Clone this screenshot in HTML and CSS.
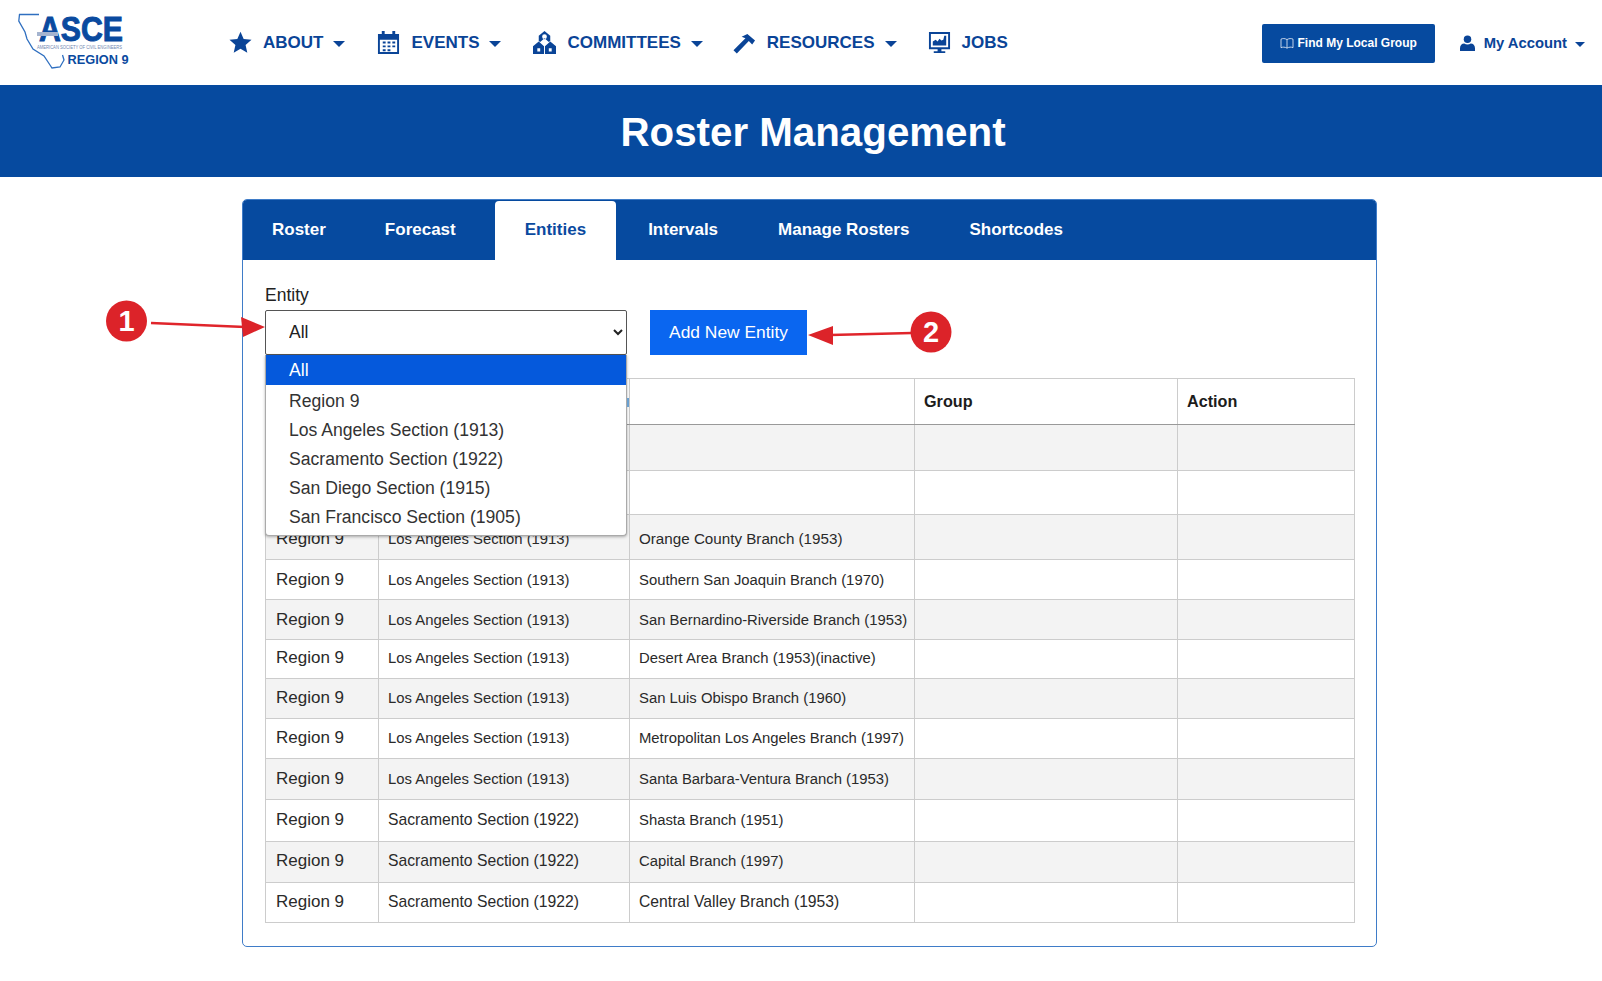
FILE: index.html
```html
<!DOCTYPE html>
<html lang="en">
<head>
<meta charset="utf-8">
<title>Roster Management</title>
<link rel="stylesheet" href="styles.css">
</head>
<body>
<div class="page">
  <header class="topbar">
    <a class="logo" href="#">
      <svg width="116" height="62" viewBox="0 0 116 62">
        <path class="logo-map" d="M21 1.500H1.500L0.800 8L7 19L9 26L15 36L26 43L32 52L34 55L42 54L46 47L44.500 42"/>
        <text class="logo-asce" x="21" y="28" textLength="84" lengthAdjust="spacingAndGlyphs">ASCE</text>
        <rect class="logo-bar" x="19" y="19" width="21" height="4"/>
        <text class="logo-sub" x="19" y="36" textLength="85" lengthAdjust="spacingAndGlyphs">AMERICAN SOCIETY OF CIVIL ENGINEERS</text>
        <text class="logo-region" x="49.500" y="50.500" textLength="61" lengthAdjust="spacingAndGlyphs">REGION 9</text>
      </svg>
    </a>
    <nav class="nav">
      <a class="nav-item" href="#">
        <svg class="nav-icon" viewBox="0 0 24 24"><path d="M12 .8l3.300 7.600 8.200.8-6.200 5.500 1.800 8.100L12 18.600l-7.100 4.200 1.800-8.100L.5 9.200l8.200-.8z"/></svg>
        <span>ABOUT</span><i class="caret"></i>
      </a>
      <a class="nav-item" href="#">
        <svg class="nav-icon" viewBox="0 0 24 24"><path fill-rule="evenodd" d="M5 0h3v3h8V0h3v3h4v21H1V3h4zM3 9v13h18V9z"/><path d="M6 11h3v2H6zM11 11h3v2h-3zM16 11h3v2h-3zM6 15h3v2H6zM11 15h3v2h-3zM16 15h3v2h-3zM6 19h3v2H6zM11 19h3v2h-3z"/></svg>
        <span>EVENTS</span><i class="caret"></i>
      </a>
      <a class="nav-item" href="#">
        <svg class="nav-icon" viewBox="0 0 24 24"><path fill-rule="evenodd" d="M12 0l6 5v5.500l-1.500 1L12 7.500l-4.500 4-1.500-1V5zM12 3.500a2.500 2.500 0 100 5 2.500 2.500 0 000-5z"/><path fill-rule="evenodd" d="M6 11l5.500 5V24H0v-8zM4.500 18v3.500h3V18zM18 11l6 5v8H12.500v-8zM16.500 18v3.500h3V18z"/></svg>
        <span>COMMITTEES</span><i class="caret"></i>
      </a>
      <a class="nav-item nav-tight" href="#">
        <svg class="nav-icon" viewBox="0 0 24 24"><path d="M9 6l6-3 8 7-3 4-3.500-3.500L4 23.500.5 20 13 7.500z"/></svg>
        <span>RESOURCES</span><i class="caret"></i>
      </a>
      <a class="nav-item nav-tight-sm" href="#">
        <svg class="nav-icon" viewBox="0 0 24 24"><path fill-rule="evenodd" d="M1 1h22v18H14v2h4v2H6v-2h4v-2H1zM3 3v14h18V3z"/><path d="M5 15v-4l3-2 2 2 2-3 2 2 2-1 1-4h2v10z"/></svg>
        <span>JOBS</span>
      </a>
    </nav>
    <div class="top-actions">
      <a class="find-btn" href="#">
        <svg class="map-icon" viewBox="0 0 16 14"><path d="M1 2.500c2-1 4.500-1 7 .5 2.500-1.500 5-1.500 7-.5v10c-2-1-4.500-1-7 .5-2.500-1.500-5-1.500-7-.5zM8 3v10"/></svg>
        Find My Local Group
      </a>
      <a class="account" href="#">
        <svg class="user-icon" viewBox="0 0 16 17"><circle cx="8" cy="4.500" r="4"/><path d="M0 17v-3c0-3 2-5 4.500-5 1 .7 2.200 1 3.500 1s2.500-.3 3.500-1c2.500 0 4.500 2 4.500 5v3z"/></svg>
        <span>My Account</span><i class="caret caret-small"></i>
      </a>
    </div>
  </header>

  <section class="banner"><h1>Roster Management</h1></section>

  <main class="card">
    <div class="tabs">
      <a class="tab" href="#">Roster</a>
      <a class="tab" href="#">Forecast</a>
      <a class="tab active" href="#">Entities</a>
      <a class="tab tab-after" href="#">Intervals</a>
      <a class="tab" href="#">Manage Rosters</a>
      <a class="tab" href="#">Shortcodes</a>
    </div>
    <div class="card-body">
      <div class="filters">
        <div class="field">
          <label class="field-label" for="entity">Entity</label>
          <select class="entity-select" id="entity"><option>All</option></select>
          <ul class="dropdown">
            <li class="selected">All</li>
            <li>Region 9</li>
            <li>Los Angeles Section (1913)</li>
            <li>Sacramento Section (1922)</li>
            <li>San Diego Section (1915)</li>
            <li>San Francisco Section (1905)</li>
          </ul>
        </div>
        <a class="add-btn" href="#">Add New Entity</a>
      </div>
      <table class="grid">
        <colgroup><col class="c1"><col class="c2"><col class="c3"><col class="c4"><col class="c5"></colgroup>
        <thead>
          <tr class="h46"><th>Region</th><th>Section</th><th></th><th>Group</th><th>Action</th></tr>
        </thead>
        <tbody>
          <tr class="h46"><td>Region 9</td><td></td><td></td><td></td><td></td></tr>
          <tr class="h44"><td>Region 9</td><td>Los Angeles Section (1913)</td><td></td><td></td><td></td></tr>
          <tr class="h45 low"><td>Region 9</td><td>Los Angeles Section (1913)</td><td class="wide">Orange County Branch (1953)</td><td></td><td></td></tr>
          <tr class="h40"><td>Region 9</td><td>Los Angeles Section (1913)</td><td>Southern San Joaquin Branch (1970)</td><td></td><td></td></tr>
          <tr class="h40"><td>Region 9</td><td>Los Angeles Section (1913)</td><td>San Bernardino-Riverside Branch (1953)</td><td></td><td></td></tr>
          <tr class="h39 up"><td>Region 9</td><td>Los Angeles Section (1913)</td><td>Desert Area Branch (1953)(inactive)</td><td></td><td></td></tr>
          <tr class="h40 up"><td>Region 9</td><td>Los Angeles Section (1913)</td><td>San Luis Obispo Branch (1960)</td><td></td><td></td></tr>
          <tr class="h40 up"><td>Region 9</td><td>Los Angeles Section (1913)</td><td>Metropolitan Los Angeles Branch (1997)</td><td></td><td></td></tr>
          <tr class="h41"><td>Region 9</td><td>Los Angeles Section (1913)</td><td>Santa Barbara-Ventura Branch (1953)</td><td></td><td></td></tr>
          <tr class="h42 up sac"><td>Region 9</td><td>Sacramento Section (1922)</td><td class="narrow">Shasta Branch (1951)</td><td></td><td></td></tr>
          <tr class="h41 up sac"><td>Region 9</td><td>Sacramento Section (1922)</td><td class="narrow">Capital Branch (1997)</td><td></td><td></td></tr>
          <tr class="h40 up sac"><td>Region 9</td><td>Sacramento Section (1922)</td><td>Central Valley Branch (1953)</td><td></td><td></td></tr>
        </tbody>
      </table>
    </div>
  </main>

  <svg class="callouts" width="1602" height="981" viewBox="0 0 1602 981">
    <path class="callout-line" d="M151 323L245 327"/>
    <path class="callout-fill" d="M265 327L241 317L243 337Z"/>
    <circle class="callout-fill" cx="126.500" cy="321" r="20.500"/>
    <text class="callout-num" x="126.500" y="331">1</text>
    <path class="callout-line" d="M830 335L912 333"/>
    <path class="callout-fill" d="M808 335L833 326L833 345Z"/>
    <circle class="callout-fill" cx="931" cy="332" r="20.500"/>
    <text class="callout-num" x="931" y="342">2</text>
  </svg>
</div>
</body>
</html>
```

FILE: styles.css
```css
* { box-sizing: border-box; }

html, body {
  margin: 0;
  padding: 0;
  background: #fff;
  overflow: hidden;
}

body {
  font-family: "Liberation Sans", Arial, sans-serif;
  color: #222;
}

a { text-decoration: none; color: inherit; }

.page {
  position: relative;
  width: 1602px;
  height: 981px;
}

/* Header */
.topbar {
  display: flex;
  align-items: center;
  height: 85px;
  padding-left: 18px;
  background: #fff;
}

.logo {
  display: block;
  width: 116px;
  height: 62px;
  margin-top: 2px;
}

.logo svg {
  display: block;
  overflow: visible;
}

.logo-map {
  fill: none;
  stroke: #2f6fc0;
  stroke-width: 1.300;
}

.logo-asce {
  font-family: "Liberation Sans", Arial, sans-serif;
  font-weight: 700;
  font-size: 35px;
  fill: #0a4a9f;
  stroke: #0a4a9f;
  stroke-width: 1;
}

.logo-bar { fill: #a5b4cf; }

.logo-sub {
  font-size: 5px;
  fill: #6f86b0;
}

.logo-region {
  font-size: 12px;
  font-weight: 700;
  fill: #0a4a9f;
}

.nav {
  display: flex;
  align-items: center;
  gap: 32px;
  margin-left: 95px;
  color: #0a4497;
  font-size: 17px;
  font-weight: 700;
}

.nav-item {
  display: flex;
  align-items: center;
}

.nav-tight { margin-left: -2px; }
.nav-tight-sm { margin-left: -1px; }

.nav-icon {
  width: 23px;
  height: 23px;
  margin-right: 11px;
  fill: #0a4497;
}

.caret {
  display: block;
  width: 0;
  height: 0;
  margin-left: 10px;
  margin-top: 2px;
  border-left: 6px solid transparent;
  border-right: 6px solid transparent;
  border-top: 6.500px solid #0a4497;
}

.caret-small {
  margin-left: 8px;
  border-left-width: 5.500px;
  border-right-width: 5.500px;
  border-top-width: 5.500px;
}

.top-actions {
  display: flex;
  align-items: center;
  margin-left: auto;
  padding-right: 17px;
  margin-top: 1px;
}

.find-btn {
  display: flex;
  align-items: center;
  justify-content: center;
  gap: 4px;
  width: 173px;
  height: 39px;
  background: #064a9f;
  border-radius: 2px;
  color: #fff;
  font-size: 12px;
  font-weight: 700;
}

.map-icon {
  width: 14px;
  height: 12px;
  fill: none;
  stroke: #dfe8f5;
  stroke-width: 1;
}

.account {
  display: flex;
  align-items: center;
  margin-left: 25px;
  color: #0a4497;
  font-size: 14.800px;
  font-weight: 700;
}

.user-icon {
  width: 15px;
  height: 16px;
  margin-right: 9px;
  fill: #0a4497;
}

.banner {
  display: flex;
  align-items: center;
  justify-content: center;
  height: 92px;
  padding: 4px 0 0 24px;
  background: #064a9f;
}

.banner h1 {
  margin: 0;
  color: #fff;
  font-size: 40.300px;
  font-weight: 700;
  line-height: 1;
}

/* Card */
.card {
  width: 1135px;
  height: 748px;
  margin: 22px 0 0 242px;
  border: 1px solid #3f7cc8;
  border-radius: 5px;
  background: #fff;
}

.tabs {
  display: flex;
  height: 60px;
  background: #064a9f;
  border-radius: 4px 4px 0 0;
  color: #fff;
  font-size: 17px;
  font-weight: 700;
}

.tab {
  display: flex;
  align-items: center;
  padding: 0 30px;
}

.tab:first-child { padding-left: 29px; padding-right: 29px; }

.tab.active {
  background: #fff;
  color: #0a4a9f;
  border-radius: 4px 4px 0 0;
  margin-left: 9px;
  margin-top: 1px;
  padding-bottom: 1px;
}

.tab-after { margin-left: 2px; }

.card-body {
  padding: 26px 21px 0 22px;
}

.filters {
  display: flex;
  align-items: flex-end;
  gap: 23px;
}

.field {
  position: relative;
  width: 362px;
}

.field-label {
  display: block;
  height: 24px;
  font-size: 17.500px;
  line-height: 18px;
  color: #222;
}

.entity-select {
  display: block;
  width: 100%;
  height: 45px;
  padding: 0 0 2px 19px;
  border: 1px solid #555;
  border-radius: 2px;
  background-color: #fff;
  color: #222;
  font-family: "Liberation Sans", Arial, sans-serif;
  font-size: 17.500px;
}

.dropdown {
  position: absolute;
  z-index: 5;
  top: 69px;
  left: 0;
  width: 100%;
  height: 181px;
  margin: 0;
  padding: 0;
  list-style: none;
  background: #fff;
  border: 1px solid #aaa;
  border-top: 0;
  border-radius: 0 0 4px 4px;
  box-shadow: 0 1px 3px rgba(0, 0, 0, .3);
  font-size: 17.600px;
  color: #333;
}

.dropdown::after {
  content: "";
  position: absolute;
  top: 43px;
  right: -3px;
  width: 2px;
  height: 9px;
  background: #6aa0d0;
}

.dropdown li {
  height: 29px;
  padding-left: 23px;
  line-height: 29px;
}

.dropdown li.selected {
  height: 30px;
  margin-bottom: 2px;
  line-height: 31px;
  background: #0559dc;
  color: #fff;
}

.add-btn {
  display: flex;
  align-items: center;
  justify-content: center;
  width: 157px;
  height: 45px;
  background: #0a66f0;
  color: #fff;
  font-size: 17.400px;
}

/* Table */
.grid {
  table-layout: fixed;
  width: 1089px;
  margin-top: 23px;
  border-collapse: collapse;
  font-size: 14.850px;
  color: #2a2a2a;
}

.c1 { width: 113px; }
.c2 { width: 251px; }
.c3 { width: 285px; }
.c4 { width: 263px; }
.c5 { width: 177px; }

.grid th,
.grid td {
  padding: 0 9px;
  border: 1px solid #ccc;
  text-align: left;
  white-space: nowrap;
  overflow: hidden;
}

.grid th:first-child,
.grid td:first-child { padding-left: 10px; }

.grid th {
  border-bottom: 1px solid #999;
  font-size: 16.200px;
  color: #1c1c1c;
}

.grid td:first-child { font-size: 17px; }

.grid tbody tr:nth-child(odd) { background: #f3f3f3; }

.grid tr.low td { padding-top: 3px; }
.grid tr.up td { padding-bottom: 2px; }
.grid tr.sac td { font-size: 15.700px; }
.grid tr.sac td:first-child { font-size: 17px; }
.grid tr.sac td.narrow { font-size: 14.850px; }
.grid td.wide { font-size: 15.200px; }

.h39 { height: 39px; }
.h40 { height: 40px; }
.h41 { height: 41px; }
.h42 { height: 42px; }
.h44 { height: 44px; }
.h45 { height: 45px; }
.h46 { height: 46px; }

/* Callouts */
.callouts {
  position: absolute;
  z-index: 10;
  top: 0;
  left: 0;
  pointer-events: none;
}

.callout-line {
  fill: none;
  stroke: #e0252b;
  stroke-width: 2.500;
}

.callout-fill { fill: #dc2329; }

.callout-num {
  fill: #fff;
  font-size: 29px;
  font-weight: 700;
  text-anchor: middle;
}
```
